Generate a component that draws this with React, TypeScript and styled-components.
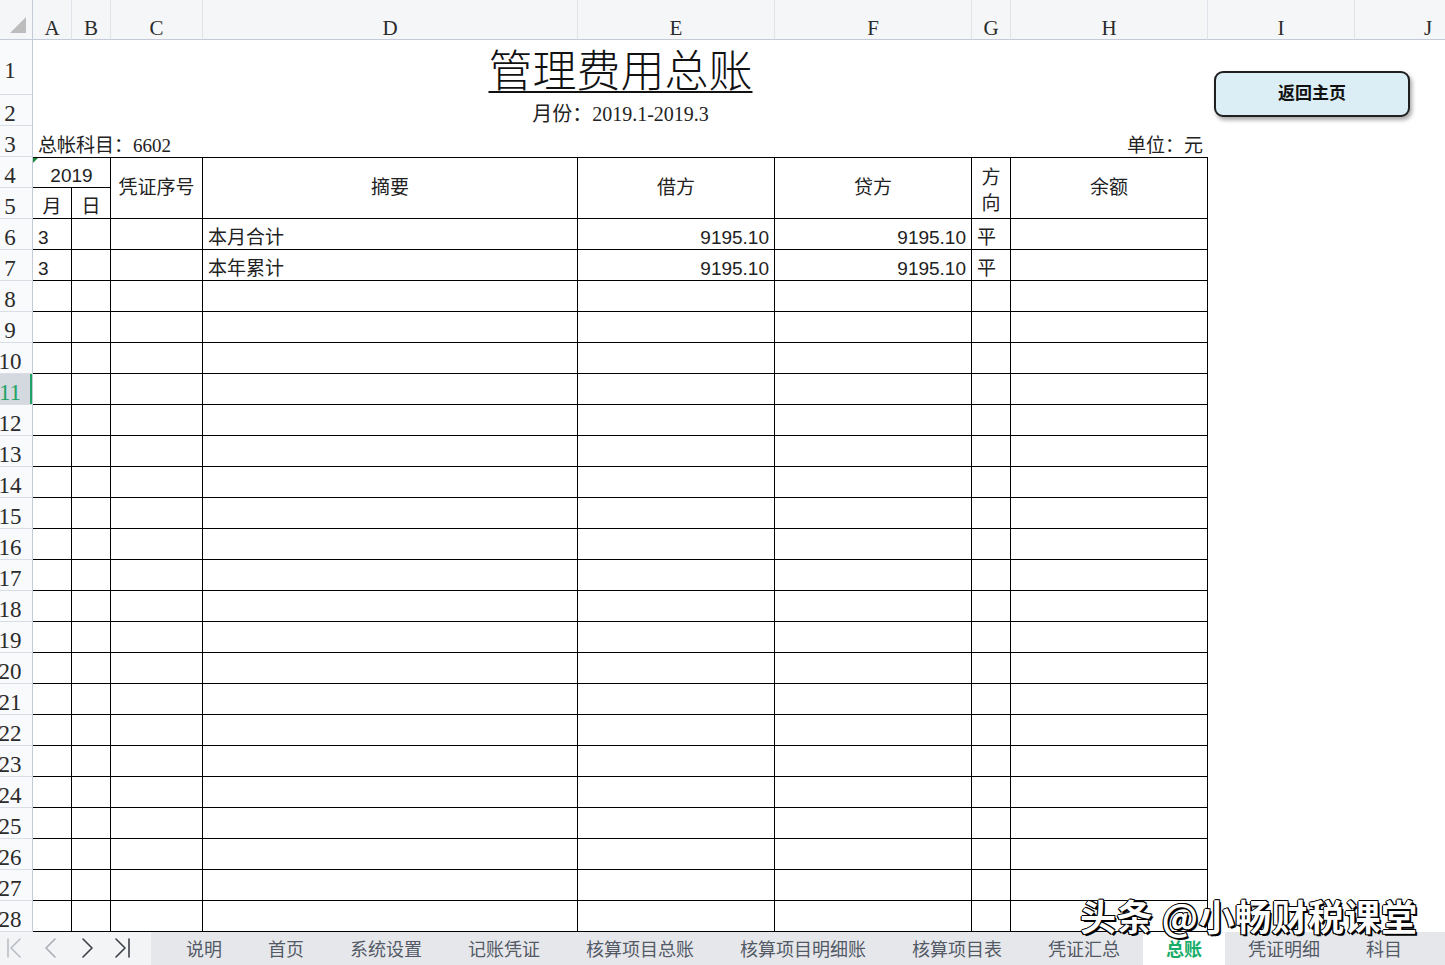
import React from 'react';
import styled, { createGlobalStyle, css } from 'styled-components';

const GlobalStyle = createGlobalStyle`
  html, body {
    margin: 0;
    padding: 0;
    background: #ffffff;
    overflow: hidden;
  }
  * {
    box-sizing: border-box;
  }
`;

const SERIF = `'Liberation Serif', 'Noto Sans CJK SC', serif`;
const SANS = `'Liberation Sans', 'Noto Sans CJK SC', sans-serif`;
const CJK = `'Noto Sans CJK SC', 'Liberation Sans', sans-serif`;

const Page = styled.div`
  position: relative;
  width: 1445px;
  height: 965px;
  overflow: hidden;
  display: flex;
  flex-direction: column;
`;

const Sheet = styled.div`
  display: grid;
  grid-template-columns: 33px 39px 39px 92px 375px 197px 197px 39px 197px 147px 147px;
  grid-template-rows: 40px 55px repeat(27, 31px);
  width: 1445px;
  height: 932px;
  overflow: hidden;
  background: #ffffff;
`;

const ColHead = styled.div<{ $col: number }>`
  grid-column: ${(p) => p.$col};
  grid-row: 1;
  display: flex;
  align-items: flex-end;
  justify-content: center;
  padding-bottom: 0;
  background: #f5f6f8;
  border-bottom: 1px solid #c3cad8;
  border-right: 1px solid #dfe3ea;
  font-family: ${SERIF};
  font-size: 21px;
  color: #2b2b2b;
  line-height: 1;
  overflow: hidden;
`;

const Corner = styled(ColHead)`
  align-items: flex-end;
  justify-content: flex-end;
  padding: 0 6px 6px 0;
  border-right: 1px solid #c3cad8;
`;

const RowHead = styled.div<{ $row: number; $active?: boolean }>`
  grid-column: 1;
  grid-row: ${(p) => p.$row + 1};
  position: relative;
  display: flex;
  align-items: center;
  padding-top: 8px;
  background: ${(p) => (p.$active ? '#d4d8df' : '#f9fafb')};
  border-bottom: 1px solid #d9dde5;
  border-right: 1px solid #c3cad8;
  font-family: ${SERIF};
  font-size: 23px;
  color: ${(p) => (p.$active ? '#21a366' : '#2b2b2b')};
  overflow: hidden;
  ${(p) =>
    p.$active &&
    css`
      &::after {
        content: '';
        position: absolute;
        right: -1px;
        top: 0;
        bottom: 0;
        width: 3px;
        background: #21a366;
      }
    `}
`;

const RowNum = styled.span`
  width: 20px;
  display: flex;
  justify-content: center;
  white-space: nowrap;
`;

type Align = 'left' | 'center' | 'right';

const Cell = styled.div<{
  $col: number;
  $span?: number;
  $row: number;
  $rows?: number;
  $align?: Align;
  $valign?: 'center' | 'end';
  $boxed?: boolean;
  $top?: boolean;
  $sans?: boolean;
  $size?: number;
}>`
  grid-column: ${(p) => `${p.$col} / span ${p.$span ?? 1}`};
  grid-row: ${(p) => `${p.$row + 1} / span ${p.$rows ?? 1}`};
  position: relative;
  display: flex;
  align-items: ${(p) => (p.$valign === 'center' ? 'center' : 'flex-end')};
  justify-content: ${(p) =>
    p.$align === 'center' ? 'center' : p.$align === 'right' ? 'flex-end' : 'flex-start'};
  padding: 0 5px 1px 5px;
  font-family: ${(p) => (p.$sans ? SANS : SERIF)};
  font-size: ${(p) => p.$size ?? 19}px;
  line-height: 1.05;
  color: #222;
  white-space: nowrap;
  ${(p) =>
    p.$boxed &&
    css`
      border-right: 1px solid #000;
      border-bottom: 1px solid #000;
    `}
  ${(p) =>
    p.$top &&
    css`
      border-top: 1px solid #000;
    `}
`;

const NoteCell = styled(Cell)`
  &::before {
    content: '';
    position: absolute;
    left: 0;
    top: 0;
    border-top: 5px solid #1e8a3c;
    border-right: 5px solid transparent;
  }
`;

const Title = styled.span`
  font-family: ${CJK};
  font-weight: 300;
  font-size: 44px;
  line-height: 1;
  color: #111;
  text-decoration: underline;
  text-decoration-thickness: 2px;
  text-underline-offset: 4px;
  padding-bottom: 4px;
`;

const Stacked = styled.span`
  display: flex;
  flex-direction: column;
  align-items: center;
  line-height: 26px;
  padding-top: 6px;
`;

const FloatButton = styled.button`
  position: absolute;
  left: 1214px;
  top: 71px;
  width: 196px;
  height: 46px;
  padding: 0 0 5px;
  border: 2px solid #1f1f1f;
  border-radius: 9px;
  background: #dbeef5;
  box-shadow: 2px 3px 4px rgba(0, 0, 0, 0.35);
  font-family: ${CJK};
  font-weight: 700;
  font-size: 17px;
  color: #111;
  cursor: pointer;
`;

const TabBar = styled.div`
  display: flex;
  height: 33px;
  background: #e6e7eb;
`;

const Nav = styled.div`
  width: 151px;
  height: 33px;
  background: #f3f4f6;
  flex-shrink: 0;
`;

const Tabs = styled.div`
  display: flex;
  padding-left: 12px;
`;

const Tab = styled.div<{ $active?: boolean }>`
  display: flex;
  align-items: center;
  padding: 0 23px 1px;
  font-family: ${CJK};
  font-size: 18px;
  color: ${(p) => (p.$active ? '#19ad69' : '#535a66')};
  font-weight: ${(p) => (p.$active ? 700 : 400)};
  background: ${(p) => (p.$active ? '#ffffff' : 'transparent')};
  white-space: nowrap;
`;

const Watermark = styled.div`
  position: absolute;
  left: 1080px;
  top: 893px;
  font-family: ${CJK};
  font-weight: 700;
  font-size: 36px;
  line-height: 44px;
  letter-spacing: 0.5px;
  color: #ffffff;
  white-space: nowrap;
  pointer-events: none;
  text-shadow: 2px 2px 0 #000, 1px 1px 0 #000, -1px 0 0 #000, 0 -1px 0 #000, 1px -1px 0 #000,
    -1px 1px 0 #000;
`;

const letters = ['A', 'B', 'C', 'D', 'E', 'F', 'G', 'H', 'I', 'J'];
const tabs = [
  '说明',
  '首页',
  '系统设置',
  '记账凭证',
  '核算项目总账',
  '核算项目明细账',
  '核算项目表',
  '凭证汇总',
  '总账',
  '凭证明细',
  '科目',
];

// body rows 6..28, columns A..H (grid cols 2..9)
const bodyRows = Array.from({ length: 23 }, (_, i) => i + 6);
const tableCols = [2, 3, 4, 5, 6, 7, 8, 9];

const filled: Record<number, { month: string; memo: string; debit: string; credit: string; dir: string }> = {
  6: { month: '3', memo: '本月合计', debit: '9195.10', credit: '9195.10', dir: '平' },
  7: { month: '3', memo: '本年累计', debit: '9195.10', credit: '9195.10', dir: '平' },
};

function NavIcons() {
  return (
    <svg width="151" height="33" viewBox="0 0 151 33" fill="none" strokeWidth="1.6" strokeLinecap="round">
      <path d="M8 7 V25" stroke="#b9bdc5" />
      <path d="M20 7 L11 16 L20 25" stroke="#b9bdc5" strokeLinejoin="round" />
      <path d="M55 7 L46 16 L55 25" stroke="#a9adb6" strokeLinejoin="round" />
      <path d="M83 7 L92 16 L83 25" stroke="#3c4048" strokeLinejoin="round" />
      <path d="M116 7 L125 16 L116 25" stroke="#3c4048" strokeLinejoin="round" />
      <path d="M129 7 V25" stroke="#3c4048" />
    </svg>
  );
}

export default function App() {
  return (
    <Page>
      <GlobalStyle />
      <Sheet>
        <Corner $col={1}>
          <svg width="16" height="16" viewBox="0 0 16 16">
            <polygon points="16,0 16,16 0,16" fill="#bdbdbd" />
          </svg>
        </Corner>
        {letters.map((l, i) => (
          <ColHead key={l} $col={i + 2}>
            {l}
          </ColHead>
        ))}

        {Array.from({ length: 28 }, (_, i) => i + 1).map((r) => (
          <RowHead key={r} $row={r} $active={r === 11}>
            <RowNum>{r}</RowNum>
          </RowHead>
        ))}

        <Cell $col={2} $span={8} $row={1} $align="center">
          <Title>管理费用总账</Title>
        </Cell>
        <Cell $col={2} $span={8} $row={2} $align="center" $size={20}>
          月份：2019.1-2019.3
        </Cell>
        <Cell $col={2} $span={4} $row={3}>
          总帐科目：6602
        </Cell>
        <Cell $col={9} $row={3} $align="right">
          单位：元
        </Cell>

        <NoteCell $col={2} $span={2} $row={4} $align="center" $boxed $top $sans>
          2019
        </NoteCell>
        <Cell $col={2} $row={5} $align="center" $boxed>
          月
        </Cell>
        <Cell $col={3} $row={5} $align="center" $boxed>
          日
        </Cell>
        <Cell $col={4} $row={4} $rows={2} $align="center" $valign="center" $boxed $top>
          凭证序号
        </Cell>
        <Cell $col={5} $row={4} $rows={2} $align="center" $valign="center" $boxed $top>
          摘要
        </Cell>
        <Cell $col={6} $row={4} $rows={2} $align="center" $valign="center" $boxed $top>
          借方
        </Cell>
        <Cell $col={7} $row={4} $rows={2} $align="center" $valign="center" $boxed $top>
          贷方
        </Cell>
        <Cell $col={8} $row={4} $rows={2} $align="center" $valign="center" $boxed $top>
          <Stacked>
            <span>方</span>
            <span>向</span>
          </Stacked>
        </Cell>
        <Cell $col={9} $row={4} $rows={2} $align="center" $valign="center" $boxed $top>
          余额
        </Cell>

        {bodyRows.map((r) => {
          const d = filled[r];
          return tableCols.map((c) => {
            let content: React.ReactNode = null;
            let align: Align = 'left';
            let sans = false;
            if (d) {
              if (c === 2) {
                content = d.month;
                sans = true;
              } else if (c === 5) content = d.memo;
              else if (c === 6) {
                content = d.debit;
                align = 'right';
                sans = true;
              } else if (c === 7) {
                content = d.credit;
                align = 'right';
                sans = true;
              } else if (c === 8) content = d.dir;
            }
            return (
              <Cell key={`${r}-${c}`} $col={c} $row={r} $align={align} $sans={sans} $boxed>
                {content}
              </Cell>
            );
          });
        })}
      </Sheet>

      <TabBar>
        <Nav>
          <NavIcons />
        </Nav>
        <Tabs>
          {tabs.map((t) => (
            <Tab key={t} $active={t === '总账'}>
              {t}
            </Tab>
          ))}
        </Tabs>
      </TabBar>

      <FloatButton>返回主页</FloatButton>
      <Watermark>头条 @小畅财税课堂</Watermark>
    </Page>
  );
}
